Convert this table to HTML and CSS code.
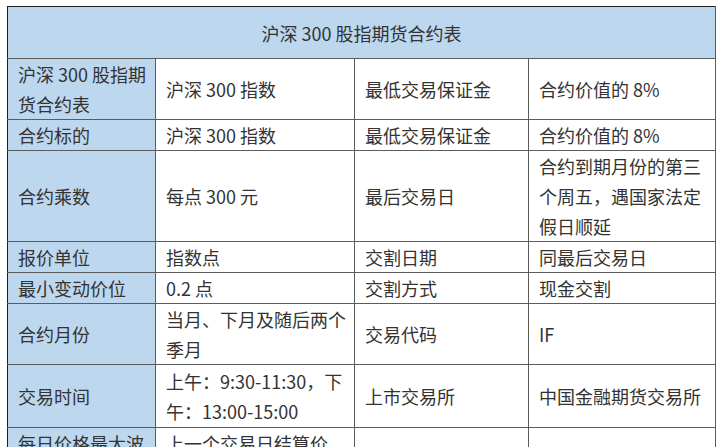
FILE: index.html
```html
<!DOCTYPE html>
<html lang="zh-CN">
<head>
<meta charset="utf-8">
<title>沪深 300 股指期货合约表</title>
<link rel="stylesheet" href="styles.css">
</head>
<body>
<table class="spec">
  <colgroup>
    <col class="c1"><col class="c2"><col class="c3"><col class="c4">
  </colgroup>
  <thead>
    <tr><th colspan="4" class="title">沪深 300 股指期货合约表</th></tr>
  </thead>
  <tbody>
    <tr><td class="key">沪深 300 股指期货合约表</td><td>沪深 300 指数</td><td>最低交易保证金</td><td>合约价值的 8%</td></tr>
    <tr><td class="key">合约标的</td><td>沪深 300 指数</td><td>最低交易保证金</td><td>合约价值的 8%</td></tr>
    <tr><td class="key">合约乘数</td><td>每点 300 元</td><td>最后交易日</td><td>合约到期月份的第三个周五，遇国家法定假日顺延</td></tr>
    <tr><td class="key">报价单位</td><td>指数点</td><td>交割日期</td><td>同最后交易日</td></tr>
    <tr><td class="key">最小变动价位</td><td>0.2 点</td><td>交割方式</td><td>现金交割</td></tr>
    <tr><td class="key">合约月份</td><td>当月、下月及随后两个季月</td><td>交易代码</td><td>IF</td></tr>
    <tr class="tall"><td class="key">交易时间</td><td>上午：9:30-11:30，下午：13:00-15:00</td><td>上市交易所</td><td>中国金融期货交易所</td></tr>
    <tr><td class="key">每日价格最大波动限制</td><td>上一个交易日结算价±10%</td><td></td><td></td></tr>
  </tbody>
</table>
</body>
</html>
```
FILE: styles.css
```css
html, body {
  background: #ffffff;
}
body {
  margin: 6px 0 0 7px;
  font-family: "Noto Sans CJK SC", "Noto Sans", sans-serif;
  font-size: 18px;
  color: #333333;
}
.spec {
  border-collapse: collapse;
  table-layout: fixed;
  width: 708px;
}
.c1 { width: 148px; }
.c2 { width: 199px; }
.c3 { width: 174px; }
.c4 { width: 187px; }
.spec th,
.spec td {
  border: 1px solid #5c5c5c;
  line-height: 30px;
  padding: 0 4px 0 10px;
  text-align: left;
  vertical-align: middle;
  font-weight: 400;
}
.spec td:first-child {
  border-left: 1px solid #1e1e1e;
}
.spec .title {
  border-top: 1px solid #1e1e1e;
  border-left: 1px solid #1e1e1e;
  background: #bdd7ee;
  text-align: center;
  padding: 11px 0 10px;
}
.spec .key {
  background: #bdd7ee;
}
.spec .tall td {
  padding-top: 1px;
  padding-bottom: 1px;
}
```
